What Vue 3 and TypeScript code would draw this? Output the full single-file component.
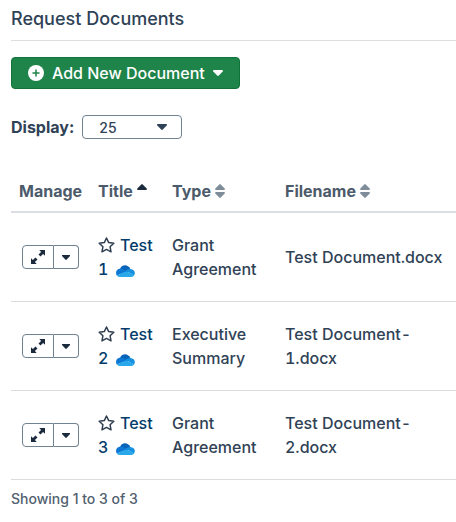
<script setup lang="ts">
import { ref } from 'vue'

interface DocumentRow {
  id: number
  title: string
  type: string
  filename: string
}

const pageSize = ref('25')

const documents: DocumentRow[] = [
  { id: 1, title: 'Test 1', type: 'Grant Agreement', filename: 'Test Document.docx' },
  { id: 2, title: 'Test 2', type: 'Executive Summary', filename: 'Test Document-1.docx' },
  { id: 3, title: 'Test 3', type: 'Grant Agreement', filename: 'Test Document-2.docx' },
]
</script>

<template>
  <main class="panel">
    <h1 class="heading">Request Documents</h1>

    <button type="button" class="add">
      <svg class="plus" viewBox="0 0 16 16" aria-hidden="true">
        <circle cx="8" cy="8" r="8" fill="#fff" />
        <path d="M8 5v6M5 8h6" stroke="#1f844a" stroke-width="1.5" stroke-linecap="round" />
      </svg>
      <span>Add New Document</span>
      <svg class="caret" viewBox="0 0 10 6" aria-hidden="true">
        <path d="M.7 0h8.6q1 .5.4 1.4L5.8 5.6q-.8.7-1.6 0L.3 1.4Q-.3.5.7 0z" fill="currentColor" />
      </svg>
    </button>

    <div class="display">
      <label for="page-size">Display:</label>
      <span class="select">
        <select id="page-size" v-model="pageSize">
          <option>10</option>
          <option>25</option>
          <option>50</option>
        </select>
        <svg class="caret select-caret" viewBox="0 0 10 6" aria-hidden="true">
          <path d="M.7 0h8.6q1 .5.4 1.4L5.8 5.6q-.8.7-1.6 0L.3 1.4Q-.3.5.7 0z" fill="currentColor" />
        </svg>
      </span>
    </div>

    <table class="documents">
      <colgroup>
        <col class="col-manage" />
        <col class="col-title" />
        <col class="col-type" />
        <col />
      </colgroup>
      <thead>
        <tr>
          <th scope="col">Manage</th>
          <th scope="col" aria-sort="ascending">
            Title
            <svg class="sort" viewBox="0 0 10 14" aria-hidden="true">
              <path d="M4.3.4q.7-.7 1.4 0l4 4q.6 1-.4 1.6H.7Q-.3 5.4.3 4.4z" fill="#1b2b3d" />
            </svg>
          </th>
          <th v-for="name in ['Type', 'Filename']" :key="name" scope="col">
            {{ name }}
            <svg class="sort" viewBox="0 0 10 14" aria-hidden="true">
              <path
                d="M4.3.4q.7-.7 1.4 0l4 4q.6 1-.4 1.6H.7Q-.3 5.4.3 4.4zM.7 8h8.6q1 .6.4 1.6l-4 4q-.7.7-1.4 0l-4-4Q-.3 8.6.7 8z"
                fill="#7f8c99"
              />
            </svg>
          </th>
        </tr>
      </thead>
      <tbody>
        <tr v-for="doc in documents" :key="doc.id">
          <td>
            <div class="actions">
              <button type="button" class="open" :aria-label="`Open ${doc.title}`">
                <svg class="expand" viewBox="0 0 14 14" aria-hidden="true">
                  <path d="M8.3 0H14v5.7l-1.900-1.800L9.500 6.500 7.500 4.500l2.600-2.600zM4.500 7.500l2 2-2.600 2.600L5.700 14H0V8.300l1.900 1.800z" fill="currentColor" />
                </svg>
              </button>
              <button type="button" class="more" :aria-label="`More actions for ${doc.title}`">
                <svg class="small-caret" viewBox="0 0 8 5" aria-hidden="true">
                  <path d="M0 0h8v1L4.7 4.6q-.7.6-1.4 0L0 1z" fill="currentColor" />
                </svg>
              </button>
            </div>
          </td>
          <td>
            <svg class="star" viewBox="0 0 17 16" aria-hidden="true">
              <path
                d="M8.500 1l2.200 4.600 5.100.7-3.700 3.500.9 5L8.500 12.400 4 14.800l.9-5L1.200 6.300l5.100-.7z"
                fill="none"
                stroke="#2f3e50"
                stroke-width="1.5"
                stroke-linejoin="round"
              />
            </svg>
            <a href="#">{{ doc.title }}</a>
            <svg class="cloud" viewBox="0 0 19 12" aria-hidden="true">
              <path d="M4.200 3.400C6-.6 12-1.200 14.300 4L11 8 5 6.500z" fill="#0764b8" />
              <path d="M4.500 3.500C1.500 3.700 0 5.600 0 8c0 1 .3 1.800.8 2.500L11 6.500 8 4.500Q6.500 3.500 4.500 3.500z" fill="#0c78d4" />
              <path d="M14.300 4Q12 3.800 9.500 5.500L18 10.500C20 7.800 18.200 4.200 14.300 4z" fill="#1490df" />
              <path d="M10.600 6.200L.8 10.400Q2 12 4 12h11.500q1.700 0 2.700-1.700z" fill="#28a8ea" />
            </svg>
          </td>
          <td>{{ doc.type }}</td>
          <td>{{ doc.filename }}</td>
        </tr>
      </tbody>
    </table>

    <p class="summary">Showing 1 to 3 of 3</p>
  </main>
</template>

<style>
body {
  margin: 0;
  background: #fff;
}
</style>

<style scoped>
.panel {
  padding: 7px 0 0 11px;
  font-family: Inter, sans-serif;
  font-size: 16px;
  font-weight: 500;
  line-height: 24px;
  color: #2f4256;
}
.heading {
  margin: 0 0 16px;
  padding-bottom: 9px;
  border-bottom: 1px solid #dcdfe1;
  font-size: 18px;
  font-weight: 500;
  line-height: 24px;
}
button,
select {
  font: inherit;
  margin: 0;
}
svg {
  flex: none;
}
.add {
  display: flex;
  align-items: center;
  gap: 8px;
  height: 32px;
  padding: 0 16px;
  border: 1px solid #10743a;
  border-radius: 4px;
  background: #1f844a;
  color: #fff;
}
.plus {
  width: 16px;
  height: 16px;
}
.caret {
  width: 10px;
  height: 6px;
}
.display {
  display: flex;
  align-items: center;
  gap: 8px;
  margin-top: 26px;
}
.display label {
  font-weight: 700;
}
.select {
  display: grid;
  align-items: center;
  width: 100px;
}
.select > * {
  grid-area: 1 / 1;
}
.select select {
  appearance: none;
  width: 100%;
  height: 24px;
  padding: 0 16px;
  border: 1px solid #718290;
  border-radius: 4px;
  background: #fff;
  color: #2f4256;
  font-size: 14px;
}
.select-caret {
  justify-self: end;
  margin-right: 15px;
  pointer-events: none;
}
.documents {
  width: 100%;
  margin-top: 32px;
  border-collapse: separate;
  border-spacing: 0;
  table-layout: fixed;
  font-variant-numeric: tabular-nums;
}
.col-manage {
  width: 79px;
}
.col-title {
  width: 74px;
}
.col-type {
  width: 113px;
}
th {
  padding: 8px;
  border-bottom: 2px solid #dadee2;
  color: #4c5b6b;
  font-weight: 700;
  text-align: left;
  white-space: nowrap;
}
td {
  padding: 20px 8px;
  border-bottom: 1px solid #dadddf;
  vertical-align: middle;
}
.sort {
  width: 10px;
  height: 14px;
  vertical-align: -1px;
}
.actions {
  display: flex;
  margin-left: 3px;
}
.actions button {
  display: flex;
  align-items: center;
  justify-content: center;
  height: 24px;
  padding: 0;
  border: 1px solid #718290;
  background: #fff;
  color: #1b2b3d;
}
.actions .open {
  width: 32px;
  border-radius: 4px 0 0 4px;
}
.actions .more {
  width: 25px;
  border-left: 0;
  border-radius: 0 4px 4px 0;
}
.expand {
  width: 14px;
  height: 14px;
}
.small-caret {
  width: 8px;
  height: 5px;
}
.star {
  width: 17px;
  height: 16px;
  margin-right: 5px;
  vertical-align: -2px;
}
td a {
  color: #033c6c;
  text-decoration: none;
}
.cloud {
  width: 19px;
  height: 12px;
  margin-left: 8px;
  vertical-align: -2px;
}
.summary {
  margin: 7px 0 0;
  color: #51606f;
  font-size: 14px;
}
</style>
